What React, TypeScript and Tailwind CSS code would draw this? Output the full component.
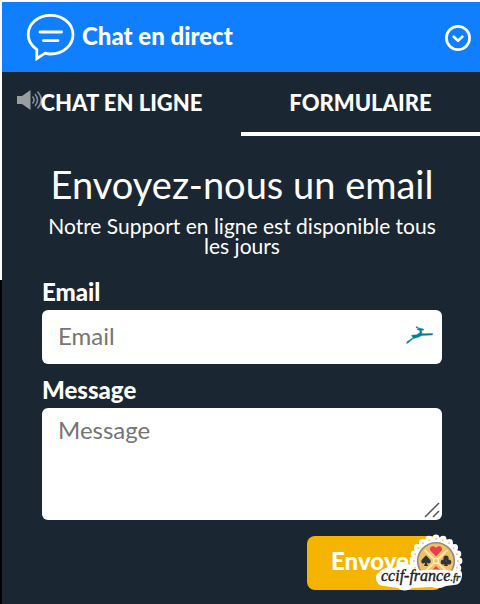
import { useState } from "react";

const SCALLOPS = Array.from({ length: 20 }, (_, i) => {
    const angle = (i / 20) * Math.PI * 2;
    return { x: 66 + Math.cos(angle) * 23, y: 31 + Math.sin(angle) * 23, dx: 66 + Math.cos(angle) * 22, dy: 31 + Math.sin(angle) * 22 };
});

function ChatBubbleIcon() {
    return (
        <svg viewBox="0 0 50 50" className="w-[50px] h-[50px] shrink-0" fill="none" stroke="white" strokeWidth="2.8" strokeLinecap="round" aria-hidden="true">
            <path strokeLinecap="butt" d="M10.8 37.6C5 33.6 2.2 28.4 2.2 22.6C2.2 11.6 12 3.3 24.5 3.3S47 11.6 47 22.6S37 42 24.5 42C22.6 42 20.8 41.7 19 41.2L10.8 46.6Z" />
            <path d="M14 20H35.6M17.4 28.6H32" />
        </svg>
    );
}

function SpeakerIcon() {
    return (
        <svg viewBox="0 0 26 20" className="w-[26px] h-5" fill="none" stroke="#858b91" strokeWidth="1.6" aria-hidden="true">
            <path fill="#9a9da1" stroke="none" d="M0 6H5L13.5 0V20L5 14H0Z" />
            <path d="M15.5 6.5Q18.5 10 15.5 13.5M18 4Q23 10 18 16M20.5 1.5Q28 10 20.5 18.5" />
        </svg>
    );
}

function RunnerIcon() {
    return (
        <svg viewBox="0 0 28 20" className="w-7 h-5" aria-hidden="true">
            <path fill="#007f99" stroke="#007f99" strokeWidth="0.4" d="M10 .5L13 2L17.5 3L17.8 4L15.5 4.4L16 7.8L26.5 7.4V8.9L16 9.4L11.5 11.5L7 12.8L2 17L.5 17.4L1 15.8L7 11.7L5.5 9.2L10.5 8.8L13.8 6.8V4.5L10.8 3.4L13 3L10 1.5Z" />
        </svg>
    );
}

function SiteBadge() {
    return (
        <svg viewBox="0 0 100 70" className="absolute right-[10px] bottom-1 w-[100px] h-[70px] pointer-events-none" role="img" aria-label="ccif-france.fr">
            <g fill="white">
                <circle cx="66" cy="31" r="24" />
                {SCALLOPS.map((s, i) => <circle key={i} cx={s.x} cy={s.y} r="3.4" />)}
                <path d="M12 40Q16 36 24 38L29 34Q38 31 43 38L82 38Q93 38 92 46Q91 55 84 55L76 56Q68 60 62 57L42 58Q34 63 28 58L14 56Q6 55 6 48Q6 43 12 40Z" />
            </g>
            <g fill="#f2c274">
                {SCALLOPS.map((s, i) => <circle key={i} cx={s.dx} cy={s.dy} r="0.9" />)}
            </g>
            <circle cx="66" cy="31" r="18.3" fill="#f2c063" stroke="#8c8e8e" strokeWidth="1.6" />
            <path d="M54.5 20L77.5 42M77.5 20L54.5 42" stroke="#fae4af" strokeWidth="2" />
            <circle cx="66" cy="31" r="2.5" fill="#f2c063" stroke="#fff1cf" strokeWidth="1.2" />
            <path fill="#e83f4f" d="M66 26.6L61 21.3C57.6 17.4 63 14 66 17.8C69 14 74.4 17.4 71 21.3Z" />
            <path fill="#e83f4f" d="M66 36L71 41H61Z" />
            <path fill="#303537" d="M56 25.3L60 29.5C62.2 32.5 59 35 56.7 32.6L58 36H54L55.3 32.6C53 35 49.8 32.5 52 29.5Z" />
            <g fill="#303537">
                <circle cx="76" cy="28.2" r="2.6" />
                <circle cx="73.3" cy="32" r="2.6" />
                <circle cx="78.7" cy="32" r="2.6" />
                <path d="M76 30L77.9 36H74.1Z" />
            </g>
            <path fill="white" d="M45 41Q64 38 84 41V55H45Z" />
            <text x="11" y="51" fill="#202124" stroke="#202124" strokeWidth="0.4" fontSize="16" fontStyle="italic" fontFamily="'Liberation Serif', serif">
                ccif-france<tspan fontSize="11">.fr</tspan>
            </text>
        </svg>
    );
}

export default function App() {
    const [tab, setTab] = useState("form");

    return (
        <div className="flex min-h-screen pt-0.5 bg-white font-['Lato',sans-serif] text-white">
            <div className="w-0.5 shrink-0 flex flex-col">
                <div className="h-[278px]" />
                <div className="grow bg-black" />
            </div>
            <main className="relative grow min-w-0 bg-[#1a2631]">
                <header className="flex items-center h-[70px] pl-6 pr-2 bg-[#107fff]">
                    <ChatBubbleIcon />
                    <h1 className="ml-1.5 pb-0.5 grow text-2xl font-black">Chat en direct</h1>
                    <button type="button" aria-label="Réduire" className="w-7 h-7">
                        <svg viewBox="0 0 28 28" className="w-7 h-7" fill="none" stroke="white" aria-hidden="true">
                            <circle cx="14" cy="15" r="11.6" strokeWidth="2.7" />
                            <path d="M9.7 13.7L14 17.7L18.3 13.7" strokeWidth="2.6" strokeLinecap="round" strokeLinejoin="round" />
                        </svg>
                    </button>
                </header>

                <div role="tablist" className="relative grid grid-cols-2 h-16 text-[22px] font-black">
                    <div className="absolute left-[15px] top-[18px]"><SpeakerIcon /></div>
                    <button
                        type="button"
                        role="tab"
                        aria-selected={tab === "chat"}
                        onClick={() => setTab("chat")}
                        className={`relative border-b-4 ${tab === "chat" ? "border-white" : "border-transparent"}`}
                    >
                        CHAT EN LIGNE
                    </button>
                    <button
                        type="button"
                        role="tab"
                        aria-selected={tab === "form"}
                        onClick={() => setTab("form")}
                        className={`border-b-4 ${tab === "form" ? "border-white" : "border-transparent"}`}
                    >
                        FORMULAIRE
                    </button>
                </div>

                <form className="pl-10 pr-[38px] pt-[26px] pb-3.5" onSubmit={(e) => e.preventDefault()}>
                    <h2 className="text-center text-[38px] leading-11">Envoyez-nous un email</h2>
                    <p className="mt-2.5 text-center text-[21px] leading-5">Notre Support en ligne est disponible tous les jours</p>

                    <label htmlFor="email" className="block mt-[22px] text-2xl leading-7 font-black">Email</label>
                    <div className="relative mt-1">
                        <input id="email" type="email" placeholder="Email" className="block w-full h-[54px] px-4 pb-1 rounded-md bg-white text-2xl text-gray-800 placeholder:text-[#757575]" />
                        <div className="absolute right-2 top-4"><RunnerIcon /></div>
                    </div>

                    <label htmlFor="message" className="block mt-3 text-2xl leading-7 font-black">Message</label>
                    <div className="relative mt-1">
                        <textarea id="message" placeholder="Message" className="block w-full h-28 px-4 py-2 rounded-md bg-white text-2xl leading-7 text-gray-800 placeholder:text-[#757575] resize-none" />
                        <svg viewBox="0 0 16 16" className="absolute right-0.5 bottom-0.5 w-4 h-4" stroke="#555" strokeWidth="1.5" aria-hidden="true">
                            <path d="M1 15L15 1M9 15L15 9" />
                        </svg>
                    </div>

                    <button type="submit" className="block mt-4 ml-auto h-[54px] px-6 pb-1 rounded-lg bg-[#f5b400] text-2xl font-black">Envoyer</button>
                </form>
                <SiteBadge />
            </main>
        </div>
    );
}
